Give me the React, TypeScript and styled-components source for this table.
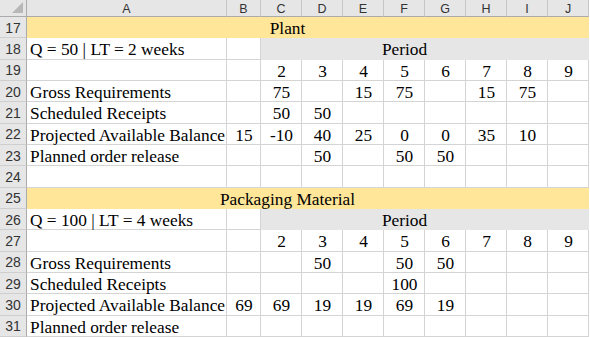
import React from 'react';
import styled, { createGlobalStyle } from 'styled-components';

const GlobalStyle = createGlobalStyle`
  html, body { margin: 0; padding: 0; background: #ffffff; overflow: hidden; }
  #root { width: 590px; height: 337px; overflow: hidden; }
`;

const GRID = '#d4d4d4';
const YELLOW = '#ffe699';
const GRAY = '#e7e6e6';
const HEAD_BG = '#e6e6e6';

const Sheet = styled.div`
  display: grid;
  grid-template-columns: 27px 200px 34px repeat(8, 41px);
  grid-template-rows: 17px repeat(15, 21.333px);
  width: 590px;
  font-family: 'Liberation Serif', 'Times New Roman', serif;
`;

const Corner = styled.div`
  position: relative;
  background: ${HEAD_BG};
  border-right: 1px solid #ababab;
  border-bottom: 1px solid #ababab;
  box-sizing: border-box;
`;

const CornerTriangle = styled.div`
  position: absolute;
  right: 3px;
  bottom: 3px;
  width: 0;
  height: 0;
  border-left: 11px solid transparent;
  border-bottom: 11px solid #b7b7b7;
`;

const ColHead = styled.div`
  background: ${HEAD_BG};
  border-right: 1px solid #c6c6c6;
  border-bottom: 1px solid #ababab;
  box-sizing: border-box;
  display: flex;
  align-items: center;
  justify-content: center;
  font-family: 'Liberation Sans', Arial, sans-serif;
  font-size: 12.5px;
  color: #333333;
  padding-top: 1px;
`;

const RowHead = styled.div`
  background: ${HEAD_BG};
  border-right: 1px solid #ababab;
  border-bottom: 1px solid #cfcfcf;
  box-sizing: border-box;
  display: flex;
  align-items: center;
  justify-content: center;
  font-family: 'Liberation Sans', Arial, sans-serif;
  font-size: 14px;
  color: #333333;
  padding-top: 1px;
`;

const Cell = styled.div<{ $fill?: string; $align?: 'left' | 'center'; $span?: number }>`
  grid-column: span ${(p) => p.$span ?? 1};
  background: ${(p) => p.$fill ?? '#ffffff'};
  border-right: 1px solid ${(p) => p.$fill ?? GRID};
  border-bottom: 1px solid ${(p) => p.$fill ?? GRID};
  box-sizing: border-box;
  display: flex;
  align-items: flex-start;
  justify-content: ${(p) => (p.$align === 'left' ? 'flex-start' : 'center')};
  padding: 2px 2px 0 3px;
  font-size: 17.33px;
  line-height: 19px;
  color: #000000;
  white-space: nowrap;
  overflow: visible;
`;

type Row =
  | { num: number; kind: 'band'; title: string }
  | { num: number; kind: 'period'; label: string }
  | { num: number; kind: 'data'; label: string; values: string[] };

const PERIODS = ['2', '3', '4', '5', '6', '7', '8', '9'];
const E = '';

const rows: Row[] = [
  { num: 17, kind: 'band', title: 'Plant' },
  { num: 18, kind: 'period', label: 'Q = 50 | LT = 2 weeks' },
  { num: 19, kind: 'data', label: '', values: [E, ...PERIODS] },
  { num: 20, kind: 'data', label: 'Gross Requirements', values: [E, '75', E, '15', '75', E, '15', '75', E] },
  { num: 21, kind: 'data', label: 'Scheduled Receipts', values: [E, '50', '50', E, E, E, E, E, E] },
  { num: 22, kind: 'data', label: 'Projected Available Balance', values: ['15', '-10', '40', '25', '0', '0', '35', '10', E] },
  { num: 23, kind: 'data', label: 'Planned order release', values: [E, E, '50', E, '50', '50', E, E, E] },
  { num: 24, kind: 'data', label: '', values: [E, E, E, E, E, E, E, E, E] },
  { num: 25, kind: 'band', title: 'Packaging Material' },
  { num: 26, kind: 'period', label: 'Q = 100 | LT = 4 weeks' },
  { num: 27, kind: 'data', label: '', values: [E, ...PERIODS] },
  { num: 28, kind: 'data', label: 'Gross Requirements', values: [E, E, '50', E, '50', '50', E, E, E] },
  { num: 29, kind: 'data', label: 'Scheduled Receipts', values: [E, E, E, E, '100', E, E, E, E] },
  { num: 30, kind: 'data', label: 'Projected Available Balance', values: ['69', '69', '19', '19', '69', '19', E, E, E] },
  { num: 31, kind: 'data', label: 'Planned order release', values: [E, E, E, E, E, E, E, E, E] },
];

const COLS = ['A', 'B', 'C', 'D', 'E', 'F', 'G', 'H', 'I', 'J'];

function renderRow(row: Row) {
  const head = <RowHead key={`h${row.num}`}>{row.num}</RowHead>;
  if (row.kind === 'band') {
    return [
      head,
      <Cell key={`b${row.num}`} $fill={YELLOW} $span={9}>{row.title}</Cell>,
      <Cell key={`j${row.num}`} $fill={YELLOW} />,
    ];
  }
  if (row.kind === 'period') {
    return [
      head,
      <Cell key={`a${row.num}`} $align="left">{row.label}</Cell>,
      <Cell key={`b${row.num}`} />,
      <Cell key={`p${row.num}`} $fill={GRAY} $span={7}>Period</Cell>,
      <Cell key={`j${row.num}`} $fill={GRAY} />,
    ];
  }
  return [
    head,
    <Cell key={`a${row.num}`} $align="left">{row.label}</Cell>,
    ...row.values.map((v, i) => <Cell key={`v${row.num}-${i}`}>{v}</Cell>),
  ];
}

export default function App() {
  return (
    <>
      <GlobalStyle />
      <Sheet>
        <Corner>
          <CornerTriangle />
        </Corner>
        {COLS.map((c) => (
          <ColHead key={c}>{c}</ColHead>
        ))}
        {rows.map((r) => renderRow(r))}
      </Sheet>
    </>
  );
}
